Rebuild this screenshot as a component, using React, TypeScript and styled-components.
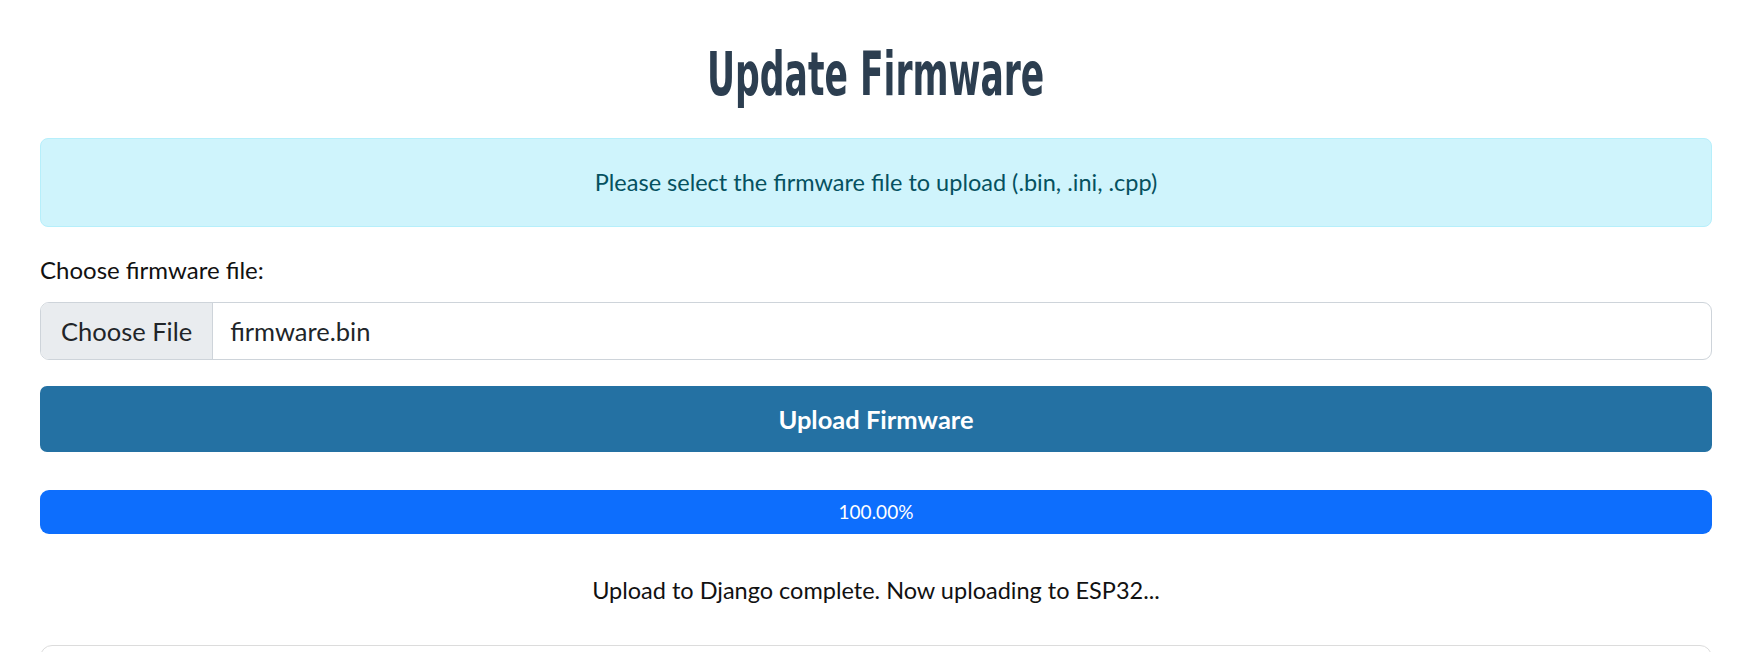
import React from 'react'
import styled, { createGlobalStyle } from 'styled-components'

const GlobalStyle = createGlobalStyle`
    html, body {
        margin: 0;
        padding: 0;
        background: #fff;
    }
    body {
        font-family: Lato, "Noto Sans", "Liberation Sans", sans-serif;
        color: #212529;
        font-size: 20px;
        line-height: 30px;
    }
`

const Page = styled.div`
    padding: 0 44px 0 40px;
`

const Title = styled.h1`
    margin: 0;
    padding-top: 43px;
    height: 100px;
    box-sizing: border-box;
    text-align: center;
    color: #2c3e50;
    font-family: "Liberation Sans Narrow", "DejaVu Sans Condensed", "Liberation Sans", sans-serif;
    font-weight: 700;
    font-size: 61px;
    line-height: 1;
`

const TitleText = styled.span`
    display: inline-block;
    transform: scaleX(0.63);
`

const Alert = styled.div`
    margin-top: 38px;
    padding: 28px 20px 29px;
    border: 1px solid #b6effb;
    border-radius: 8px;
    background: #cff4fc;
    color: #055160;
    font-size: 23.5px;
    text-align: center;
`

const Label = styled.label`
    display: block;
    margin-top: 28px;
    font-size: 24px;
    color: #111;
`

const FileInput = styled.div`
    margin-top: 17px;
    display: flex;
    height: 58px;
    box-sizing: border-box;
    border: 1px solid #ced4da;
    border-radius: 9px;
    overflow: hidden;
    font-size: 25.5px;
    background: #fff;
`

const FileButton = styled.span`
    display: flex;
    align-items: center;
    padding: 0 20px;
    background: #e9ecef;
    border-right: 1px solid #ced4da;
    color: #212529;
`

const FileName = styled.span`
    display: flex;
    align-items: center;
    padding: 0 17px;
`

const UploadButton = styled.button`
    display: block;
    width: 100%;
    margin-top: 26px;
    height: 66px;
    border: none;
    border-radius: 7px;
    background: #2471a3;
    color: #fff;
    font-family: Lato, "Noto Sans", sans-serif;
    font-weight: 700;
    font-size: 25.5px;
`

const Progress = styled.div`
    margin-top: 38px;
    height: 44px;
    border-radius: 9px;
    background: #e9ecef;
    overflow: hidden;
    display: flex;
`

const ProgressBar = styled.div`
    background: #0d6efd;
    color: #fff;
    font-size: 19px;
    display: flex;
    align-items: center;
    justify-content: center;
`

const Status = styled.p`
    margin: 41px 0 0;
    text-align: center;
    font-size: 23.5px;
    color: #111;
`

const Card = styled.div`
    margin-top: 40px;
    height: 80px;
    border: 1px solid #dcdcdc;
    border-radius: 12px;
`

const App: React.FC = () => {
    const percent = 100

    return (
        <>
            <GlobalStyle />
            <Page>
                <Title><TitleText>Update Firmware</TitleText></Title>
                <Alert>Please select the firmware file to upload (.bin, .ini, .cpp)</Alert>
                <Label>Choose firmware file:</Label>
                <FileInput>
                    <FileButton>Choose File</FileButton>
                    <FileName>firmware.bin</FileName>
                </FileInput>
                <UploadButton>Upload Firmware</UploadButton>
                <Progress>
                    <ProgressBar style={{ width: `${percent}%` }}>{percent.toFixed(2)}%</ProgressBar>
                </Progress>
                <Status>Upload to Django complete. Now uploading to ESP32...</Status>
                <Card />
            </Page>
        </>
    )
}

export default App
